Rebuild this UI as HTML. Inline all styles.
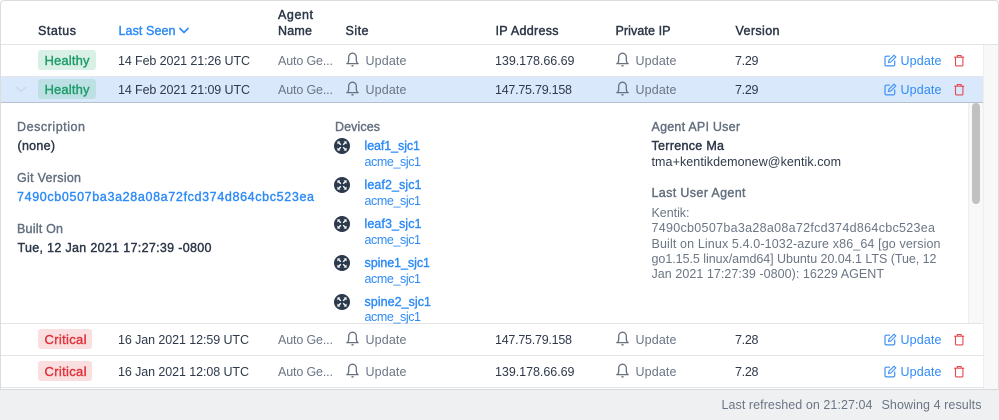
<!DOCTYPE html>
<html><head><meta charset="utf-8"><title>Agents</title>
<style>
html,body{margin:0;padding:0;background:#fff;width:999px;height:420px;overflow:hidden}
svg{display:block}
text{font-family:"Liberation Sans",sans-serif;font-size:12.5px;fill:#2f3a4a}
.h{font-size:12.5px;fill:#2d3848;stroke:#2d3848;stroke-width:.45px}
.hb{font-size:12.5px;fill:#2e8bf6;stroke:#2e8bf6;stroke-width:.4px}
.g{fill:#6b7684}
.b{fill:#2e8bf6}
.l{font-size:12.5px;fill:#64707f;stroke:#64707f;stroke-width:.4px}
.d{font-size:12.5px;fill:#2d3848;stroke:#2d3848;stroke-width:.42px}
.bm{fill:#2e8bf6;stroke:#2e8bf6;stroke-width:.38px}
.hl{font-size:13px;fill:#1f9d6b;stroke:#1f9d6b;stroke-width:.42px}
.cr{font-size:13px;fill:#e0333c;stroke:#e0333c;stroke-width:.42px}
</style></head><body>
<svg width="999" height="420" viewBox="0 0 999 420" xmlns="http://www.w3.org/2000/svg">
<defs>
<g id="bell" fill="none" stroke="#66717f" stroke-width="1.300"><path d="M.8 11.600h12.400M2 11.500c1-1.100 1.200-2.300 1.200-4V5a3.800 3.800 0 0 1 7.600 0v2.500c0 1.700.2 2.900 1.200 4"/><path d="M6 13.800h2" stroke-width="1.500"/></g>
<g id="edit" fill="none" stroke="#3d92f5" stroke-width="1.200"><path d="M6 2.200H2.400A1.400 1.400 0 0 0 1 3.600v6.900a1.400 1.400 0 0 0 1.400 1.400h6.900a1.400 1.400 0 0 0 1.400-1.400V6.500"/><path d="M4.500 8.500l.5-2.300L10 1.200l1.800 1.800-5 5z" stroke-width="1.100"/></g>
<g id="trash" fill="none" stroke="#e5484d" stroke-width="1.100"><path d="M.2 2.700h10M3.300 2.500V1h3.800v1.500M1.500 3v7.400a1 1 0 0 0 1 1h5.400a1 1 0 0 0 1-1V3"/></g>
<g id="dev"><circle cx="8" cy="8" r="8" fill="#2b3a4c"/><g fill="none" stroke="#fff" stroke-width="1.400"><path d="M6.800 6.800L4.800 4.800M9.200 6.800l2-2M6.800 9.200l-2 2M9.200 9.200l2 2"/></g><g fill="#fff"><path d="M3.400 3.400h3L3.400 6.400zM12.600 3.400h-3l3 3zM3.400 12.600h3l-3-3zM12.600 12.600h-3l3-3z"/></g></g>
</defs>

<!-- backgrounds -->
<rect width="999" height="420" fill="#fff"/>
<rect x="983" y="45" width="15" height="344" fill="#f8f8f9"/>
<rect x="0" y="77" width="983" height="25" fill="#d9e8fb"/>
<rect x="968" y="103" width="15" height="220" fill="#f8f8f9"/>
<rect x="968" y="103" width="1" height="220" fill="#eeeeef"/>
<rect x="972" y="103" width="8" height="101" rx="4" fill="#c1c1c1"/>
<rect x="0" y="390" width="999" height="30" fill="#eef0f2"/>

<!-- lines -->
<rect x="0" y="44" width="998" height="1" fill="#e3e4e6"/>
<rect x="0" y="76" width="983" height="1" fill="#e3e6ea"/>
<rect x="0" y="102" width="983" height="1" fill="#b4c0cc"/>
<rect x="0" y="323" width="983" height="1" fill="#e3e4e6"/>
<rect x="0" y="355" width="983" height="1" fill="#e3e4e6"/>
<rect x="0" y="387" width="983" height="1" fill="#e3e4e6"/>
<rect x="0" y="389" width="999" height="1" fill="#d8d9dc"/>
<rect x="983" y="45" width="1" height="344" fill="#eeeeef"/>
<path d="M.5 390V4a3.500 3.500 0 0 1 3.500-3.500H995a3.500 3.500 0 0 1 3.500 3.500V390" fill="none" stroke="#dcdcdc" stroke-width="1"/>

<!-- header -->
<text class="h" x="38" y="35" textLength="38">Status</text>
<text class="hb" x="118.500" y="35" textLength="57">Last Seen</text>
<path d="M179.500 28l4.500 4.500 4.500-4.500" fill="none" stroke="#2e8bf6" stroke-width="1.600"/>
<text class="h" x="278" y="19" textLength="35">Agent</text>
<text class="h" x="278" y="35" textLength="34">Name</text>
<text class="h" x="345.500" y="35" textLength="23">Site</text>
<text class="h" x="495.500" y="35" textLength="63">IP Address</text>
<text class="h" x="615.500" y="35" textLength="55">Private IP</text>
<text class="h" x="735.500" y="35" textLength="44">Version</text>

<!-- row 1 -->
<rect x="38" y="50" width="58" height="20" rx="3" fill="#d9f0e6"/>
<text class="hl" x="44.500" y="65" textLength="45">Healthy</text>
<text x="118" y="65" textLength="132">14 Feb 2021 21:26 UTC</text>
<text class="g" x="278" y="65" textLength="55">Auto Ge...</text>
<use href="#bell" x="345.500" y="52"/>
<text class="g" x="365.500" y="65" textLength="41">Update</text>
<text x="495" y="65" textLength="79.500">139.178.66.69</text>
<use href="#bell" x="615.500" y="52"/>
<text class="g" x="635.500" y="65" textLength="41">Update</text>
<text x="735" y="65" textLength="23.500">7.29</text>
<use href="#edit" x="884" y="54"/>
<text class="b" x="900.500" y="65" textLength="41">Update</text>
<use href="#trash" x="954" y="54.500"/>

<!-- row 2 -->
<path d="M16 87l5 4.500 5-4.500" fill="none" stroke="#c6d3e2" stroke-width="1"/>
<rect x="38" y="79" width="58" height="20" rx="3" fill="#bde0e4"/>
<text class="hl" x="44.500" y="94" textLength="45">Healthy</text>
<text x="118" y="94" textLength="132">14 Feb 2021 21:09 UTC</text>
<text class="g" x="278" y="94" textLength="55">Auto Ge...</text>
<use href="#bell" x="345.500" y="81"/>
<text class="g" x="365.500" y="94" textLength="41">Update</text>
<text x="495" y="94" textLength="77">147.75.79.158</text>
<use href="#bell" x="615.500" y="81"/>
<text class="g" x="635.500" y="94" textLength="41">Update</text>
<text x="735" y="94" textLength="23.500">7.29</text>
<use href="#edit" x="884" y="83"/>
<text class="b" x="900.500" y="94" textLength="41">Update</text>
<use href="#trash" x="954" y="83.500"/>

<!-- detail left -->
<text class="l" x="17" y="131" textLength="68">Description</text>
<text class="d" x="17.500" y="150" textLength="37.500">(none)</text>
<text class="l" x="17" y="182" textLength="64">Git Version</text>
<text class="bm" x="17" y="201" textLength="297">7490cb0507ba3a28a08a72fcd374d864cbc523ea</text>
<text class="l" x="17" y="233" textLength="46">Built On</text>
<text class="d" x="17.500" y="252" textLength="194">Tue, 12 Jan 2021 17:27:39 -0800</text>

<!-- devices -->
<text class="l" x="335" y="131" textLength="45">Devices</text>
<use href="#dev" x="334" y="138"/>
<text class="bm" x="364.500" y="150" textLength="55.500">leaf1_sjc1</text>
<text class="b" x="364.500" y="166" textLength="56.500">acme_sjc1</text>
<use href="#dev" x="334" y="177"/>
<text class="bm" x="364.500" y="189" textLength="57">leaf2_sjc1</text>
<text class="b" x="364.500" y="205" textLength="56.500">acme_sjc1</text>
<use href="#dev" x="334" y="216"/>
<text class="bm" x="364.500" y="228" textLength="57">leaf3_sjc1</text>
<text class="b" x="364.500" y="244" textLength="56.500">acme_sjc1</text>
<use href="#dev" x="334" y="255"/>
<text class="bm" x="364.500" y="267" textLength="65.500">spine1_sjc1</text>
<text class="b" x="364.500" y="283" textLength="56.500">acme_sjc1</text>
<use href="#dev" x="334" y="294"/>
<text class="bm" x="364.500" y="306" textLength="66.500">spine2_sjc1</text>
<text class="b" x="364.500" y="321" textLength="56.500">acme_sjc1</text>

<!-- detail right -->
<text class="l" x="651.500" y="131" textLength="88.500">Agent API User</text>
<text class="d" x="651.500" y="150" textLength="72.500">Terrence Ma</text>
<text x="651.500" y="166" textLength="189.500">tma+kentikdemonew@kentik.com</text>
<text class="l" x="651.500" y="197" textLength="94">Last User Agent</text>
<text class="g" x="651.500" y="217" textLength="38">Kentik:</text>
<text class="g" x="651.500" y="232" textLength="283.500">7490cb0507ba3a28a08a72fcd374d864cbc523ea</text>
<text class="g" x="651.500" y="248" textLength="289">Built on Linux 5.4.0-1032-azure x86_64 [go version</text>
<text class="g" x="651.500" y="263" textLength="285">go1.15.5 linux/amd64] Ubuntu 20.04.1 LTS (Tue, 12</text>
<text class="g" x="651.500" y="278" textLength="232.500">Jan 2021 17:27:39 -0800): 16229 AGENT</text>

<!-- row 3 -->
<rect x="38" y="329" width="54" height="20" rx="3" fill="#fadfe0"/>
<text class="cr" x="44.500" y="344" textLength="42">Critical</text>
<text x="118" y="344" textLength="131">16 Jan 2021 12:59 UTC</text>
<text class="g" x="278" y="344" textLength="55">Auto Ge...</text>
<use href="#bell" x="345.500" y="331"/>
<text class="g" x="365.500" y="344" textLength="41">Update</text>
<text x="495" y="344" textLength="77">147.75.79.158</text>
<use href="#bell" x="615.500" y="331"/>
<text class="g" x="635.500" y="344" textLength="41">Update</text>
<text x="735" y="344" textLength="23.500">7.28</text>
<use href="#edit" x="884" y="333"/>
<text class="b" x="900.500" y="344" textLength="41">Update</text>
<use href="#trash" x="954" y="333.500"/>

<!-- row 4 -->
<rect x="38" y="361" width="54" height="20" rx="3" fill="#fadfe0"/>
<text class="cr" x="44.500" y="376" textLength="42">Critical</text>
<text x="118" y="376" textLength="131">16 Jan 2021 12:08 UTC</text>
<text class="g" x="278" y="376" textLength="55">Auto Ge...</text>
<use href="#bell" x="345.500" y="363"/>
<text class="g" x="365.500" y="376" textLength="41">Update</text>
<text x="495" y="376" textLength="79.500">139.178.66.69</text>
<use href="#bell" x="615.500" y="363"/>
<text class="g" x="635.500" y="376" textLength="41">Update</text>
<text x="735" y="376" textLength="23.500">7.28</text>
<use href="#edit" x="884" y="365"/>
<text class="b" x="900.500" y="376" textLength="41">Update</text>
<use href="#trash" x="954" y="365.500"/>

<!-- footer -->
<text class="g" x="721.500" y="409" textLength="151">Last refreshed on 21:27:04</text>
<text class="g" x="881.500" y="409" textLength="100">Showing 4 results</text>
</svg>
</body></html>
